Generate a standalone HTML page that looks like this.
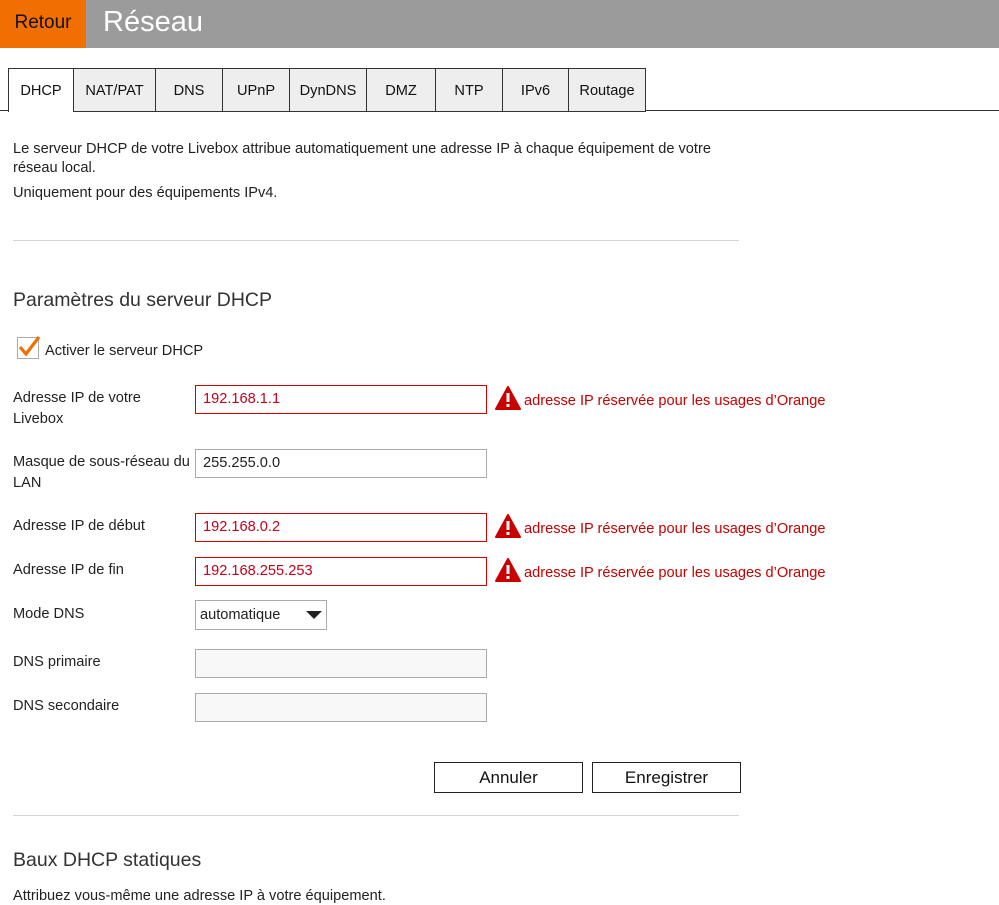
<!DOCTYPE html>
<html><head><meta charset="utf-8"><style>
*{box-sizing:border-box;margin:0;padding:0}
body{width:999px;height:905px;position:relative;overflow:hidden;background:#fff;font-family:"Liberation Sans",Arial,sans-serif;color:#222;font-size:14.6px}
.a{position:absolute;white-space:nowrap}
.hdr{position:absolute;left:0;top:0;width:999px;height:48px;background:#9b9b9b}
.ret{position:absolute;left:0;top:0;width:86px;height:48px;background:#f16e00;color:#111;font-size:19px;line-height:46px;text-align:center}
.ttl{position:absolute;left:103px;top:6px;color:#fff;font-size:29px}
.tab{position:absolute;top:68px;height:44px;border:1px solid #333;border-right:none;background:#eee;text-align:center;line-height:44px;font-size:14.6px;color:#111}
.inp{position:absolute;left:195px;width:292px;height:29px;border:1px solid #aaa;padding-left:7px;line-height:27px;font-size:14.6px;color:#222}
.err{border-color:#d40000;color:#c4001d}
.dis{background:#f8f8f8}
.lbl{position:absolute;left:13px;line-height:21px;font-size:14.6px;color:#222}
.warn{position:absolute;left:495px;color:#c80000;font-size:14.6px}
.warn svg{position:absolute;left:0;top:0}
.warn span{position:absolute;left:29px;top:7px;white-space:nowrap}
.hr{position:absolute;left:13px;width:726px;height:1px;background:#d6d6d6}
.btn{position:absolute;top:762px;height:31px;border:1px solid #222;text-align:center;line-height:29px;font-size:17px;color:#111}
</style></head><body>
<div class="hdr"></div>
<div class="ret">Retour</div>
<div class="ttl">Réseau</div>

<div class="a" style="left:0;top:110px;width:999px;height:1px;background:#333"></div>
<div class="tab" style="left:8px;width:65px;background:#fff;height:44px;border-bottom:none">DHCP</div>
<div class="tab" style="left:73px;width:82px">NAT/PAT</div>
<div class="tab" style="left:155px;width:67px">DNS</div>
<div class="tab" style="left:222px;width:67px">UPnP</div>
<div class="tab" style="left:289px;width:77px">DynDNS</div>
<div class="tab" style="left:366px;width:69px">DMZ</div>
<div class="tab" style="left:435px;width:67px">NTP</div>
<div class="tab" style="left:502px;width:66px">IPv6</div>
<div class="tab" style="left:568px;width:78px;border-right:1px solid #333">Routage</div>

<div class="a" style="left:13px;top:140px;line-height:19px">Le serveur DHCP de votre Livebox attribue automatiquement une adresse IP à chaque équipement de votre<br>réseau local.</div>
<div class="a" style="left:13px;top:185px">Uniquement pour des équipements IPv4.</div>
<div class="hr" style="top:240px"></div>

<div class="a" style="left:13px;top:289px;font-size:19.5px;color:#333">Paramètres du serveur DHCP</div>

<div class="a" style="left:17px;top:337px;width:22px;height:22px;border:1px solid #aaa;background:#fff"></div>
<svg class="a" style="left:16px;top:333px" width="26" height="26" viewBox="0 0 26 26"><path d="M4 14 L10 21 L23 4" fill="none" stroke="#f16e00" stroke-width="3.2"/></svg>
<div class="a" style="left:45px;top:343px">Activer le serveur DHCP</div>

<div class="lbl" style="top:388px">Adresse IP de votre<br>Livebox</div>
<div class="inp err" style="top:385px">192.168.1.1</div>
<div class="warn" style="top:386px"><svg width="26" height="24" viewBox="0 0 26 24"><path d="M13 1 L25 23 L1 23 Z" fill="#c80000" stroke="#c80000" stroke-linejoin="round" stroke-width="2"/><rect x="11.5" y="7" width="3" height="9" fill="#fff"/><rect x="11.5" y="18" width="3" height="3" fill="#fff"/></svg><span>adresse IP réservée pour les usages d’Orange</span></div>

<div class="lbl" style="top:452px">Masque de sous-réseau du<br>LAN</div>
<div class="inp" style="top:449px">255.255.0.0</div>

<div class="lbl" style="top:516px">Adresse IP de début</div>
<div class="inp err" style="top:513px">192.168.0.2</div>
<div class="warn" style="top:514px"><svg width="26" height="24" viewBox="0 0 26 24"><path d="M13 1 L25 23 L1 23 Z" fill="#c80000" stroke="#c80000" stroke-linejoin="round" stroke-width="2"/><rect x="11.5" y="7" width="3" height="9" fill="#fff"/><rect x="11.5" y="18" width="3" height="3" fill="#fff"/></svg><span>adresse IP réservée pour les usages d’Orange</span></div>

<div class="lbl" style="top:560px">Adresse IP de fin</div>
<div class="inp err" style="top:557px">192.168.255.253</div>
<div class="warn" style="top:558px"><svg width="26" height="24" viewBox="0 0 26 24"><path d="M13 1 L25 23 L1 23 Z" fill="#c80000" stroke="#c80000" stroke-linejoin="round" stroke-width="2"/><rect x="11.5" y="7" width="3" height="9" fill="#fff"/><rect x="11.5" y="18" width="3" height="3" fill="#fff"/></svg><span>adresse IP réservée pour les usages d’Orange</span></div>

<div class="lbl" style="top:604px">Mode DNS</div>
<div class="inp" style="top:600px;width:132px;height:30px;padding-left:4px;line-height:28px">automatique</div>
<svg class="a" style="left:306px;top:610px" width="16" height="10" viewBox="0 0 16 10"><path d="M0 1 L16 1 L8 9 Z" fill="#222"/></svg>

<div class="lbl" style="top:652px">DNS primaire</div>
<div class="inp dis" style="top:649px"></div>
<div class="lbl" style="top:696px">DNS secondaire</div>
<div class="inp dis" style="top:693px"></div>

<div class="btn" style="left:434px;width:149px">Annuler</div>
<div class="btn" style="left:592px;width:149px">Enregistrer</div>

<div class="hr" style="top:815px"></div>
<div class="a" style="left:13px;top:849px;font-size:19.5px;color:#333">Baux DHCP statiques</div>
<div class="a" style="left:13px;top:888px">Attribuez vous-même une adresse IP à votre équipement.</div>
</body></html>
